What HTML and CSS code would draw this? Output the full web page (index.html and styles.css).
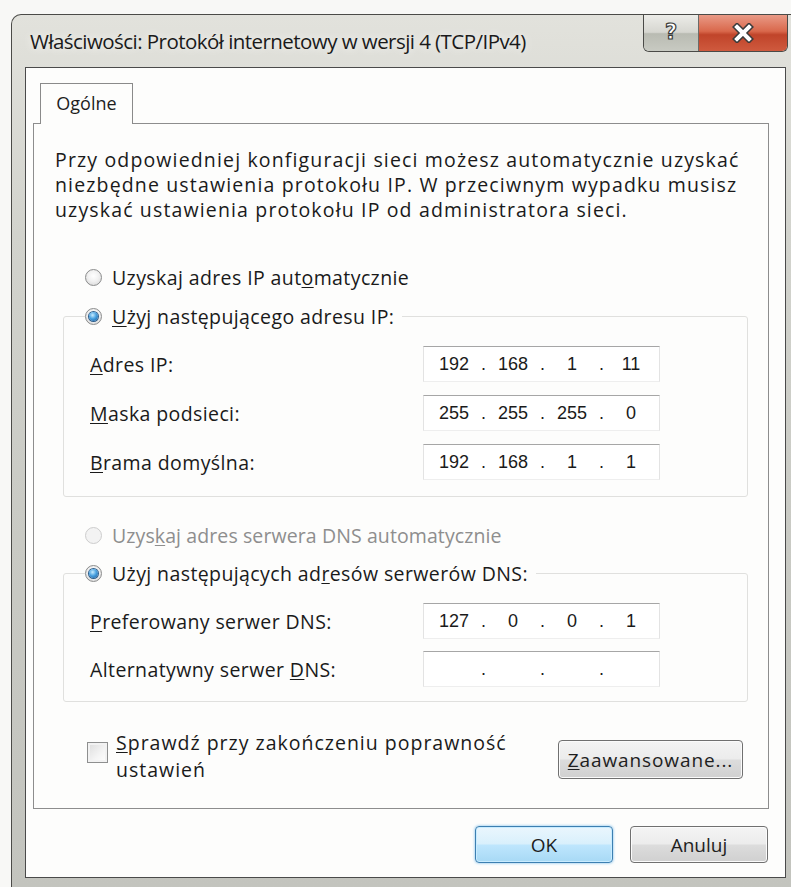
FILE: index.html
```html
<!DOCTYPE html>
<html lang="pl">
<head>
<meta charset="utf-8">
<title>Właściwości: Protokół internetowy w wersji 4 (TCP/IPv4)</title>
<link rel="stylesheet" href="styles.css">
</head>
<body>
<div class="window">
  <div class="titlebar">
    <span class="title">Właściwości: Protokół internetowy w wersji 4 (TCP/IPv4)</span>
    <div class="caption-btns">
      <span class="cap-btn help"><span class="help-glyph">?</span></span>
      <span class="cap-btn close">
        <svg width="22" height="20" viewBox="0 0 22 20">
          <path d="M5 4 L17 16 M17 4 L5 16" stroke="#3a3a3a" stroke-width="7" stroke-linecap="square"/>
          <path d="M5 4 L17 16 M17 4 L5 16" stroke="#ffffff" stroke-width="4" stroke-linecap="square"/>
        </svg>
      </span>
    </div>
  </div>

  <div class="client">
    <div class="tabs"><div class="tab">Ogólne</div></div>

    <div class="panel">
      <p class="intro">Przy odpowiedniej konfiguracji sieci możesz automatycznie uzyskać<br>niezbędne ustawienia protokołu IP. W przeciwnym wypadku musisz<br>uzyskać ustawienia protokołu IP od administratora sieci.</p>

      <div class="option first-option">
        <span class="radio"></span>
        <span>Uzyskaj adres IP aut<u>o</u>matycznie</span>
      </div>

      <fieldset class="group group-ip">
        <legend class="option">
          <span class="radio checked"></span>
          <span><u>U</u>żyj następującego adresu IP:</span>
        </legend>
        <div class="field-row">
          <span class="label"><u>A</u>dres IP:</span>
          <span class="ip-box"><span class="seg">192</span><span class="dot">.</span><span class="seg">168</span><span class="dot">.</span><span class="seg">1</span><span class="dot">.</span><span class="seg">11</span></span>
        </div>
        <div class="field-row">
          <span class="label"><u>M</u>aska podsieci:</span>
          <span class="ip-box"><span class="seg">255</span><span class="dot">.</span><span class="seg">255</span><span class="dot">.</span><span class="seg">255</span><span class="dot">.</span><span class="seg">0</span></span>
        </div>
        <div class="field-row">
          <span class="label"><u>B</u>rama domyślna:</span>
          <span class="ip-box"><span class="seg">192</span><span class="dot">.</span><span class="seg">168</span><span class="dot">.</span><span class="seg">1</span><span class="dot">.</span><span class="seg">1</span></span>
        </div>
      </fieldset>

      <div class="option disabled dns-auto">
        <span class="radio disabled"></span>
        <span>Uzys<u>k</u>aj adres serwera DNS automatycznie</span>
      </div>

      <fieldset class="group group-dns">
        <legend class="option">
          <span class="radio checked"></span>
          <span>Użyj następujących ad<u>r</u>esów serwerów DNS:</span>
        </legend>
        <div class="field-row">
          <span class="label"><u>P</u>referowany serwer DNS:</span>
          <span class="ip-box"><span class="seg">127</span><span class="dot">.</span><span class="seg">0</span><span class="dot">.</span><span class="seg">0</span><span class="dot">.</span><span class="seg">1</span></span>
        </div>
        <div class="field-row">
          <span class="label alt">Alternatywny serwer <u>D</u>NS:</span>
          <span class="ip-box"><span class="seg"></span><span class="dot">.</span><span class="seg"></span><span class="dot">.</span><span class="seg"></span><span class="dot">.</span><span class="seg"></span></span>
        </div>
      </fieldset>

      <div class="check-row">
        <span class="checkbox"></span>
        <span class="check-label">
          <span class="check-line"><u>S</u>prawdź przy zakończeniu poprawność</span>
          <span class="check-line">ustawień</span>
        </span>
        <button class="btn advanced" type="button"><u>Z</u>aawansowane...</button>
      </div>
    </div>

    <div class="dialog-buttons">
      <button class="btn default" type="button">OK</button>
      <button class="btn" type="button">Anuluj</button>
    </div>
  </div>
</div>
</body>
</html>
```
FILE: styles.css
```css
* {
  box-sizing: border-box;
}

html,
body {
  margin: 0;
  padding: 0;
  background: #f8f8f6;
  overflow: hidden;
}

body {
  width: 791px;
  height: 887px;
  font-family: "Open Sans", "Noto Sans", sans-serif;
  color: #222;
}

u {
  text-decoration-thickness: 1px;
  text-underline-offset: 2px;
}

/* window frame (Aero glass, light grey) */
.window {
  margin: 14px 0 0 11px;
  width: 790px;
  border: 1px solid #4b4b48;
  border-bottom: none;
  border-radius: 10px 10px 0 0;
  background: linear-gradient(180deg, #e2e2dc 0%, #d2d3cd 25%, #c9cac4 60%, #c3c4be 100%);
  padding: 0 14px 10px 13px;
  display: flex;
  flex-direction: column;
}

.titlebar {
  height: 52px;
  display: flex;
  align-items: center;
}

.title {
  margin-left: 5px;
  font-size: 20.5px;
  letter-spacing: -0.55px;
  color: #1a1a1a;
  text-shadow: 0 0 8px rgba(255, 255, 255, 0.9);
  white-space: nowrap;
}

.caption-btns {
  margin-left: auto;
  margin-right: -2px;
  align-self: flex-start;
  display: flex;
  height: 37px;
  border: 1px solid #4a4a47;
  border-top: none;
  border-radius: 0 0 6px 6px;
  overflow: hidden;
}

.cap-btn {
  display: flex;
  align-items: center;
  justify-content: center;
  height: 100%;
}

.cap-btn.help {
  width: 55px;
  border-right: 1px solid #6b6b68;
  background: linear-gradient(180deg, #ecece8 0%, #d6d6d0 48%, #b9bbb2 52%, #c8cac2 100%);
}

.help-glyph {
  font-family: "DejaVu Sans", sans-serif;
  font-weight: bold;
  font-size: 21px;
  color: #ffffff;
  -webkit-text-stroke: 1.2px #3c3c3a;
  margin-top: -2px;
}

.cap-btn.close {
  width: 88px;
  background: linear-gradient(180deg, #e99a86 0%, #d9684c 45%, #c0442a 55%, #cf5a3e 100%);
}

/* client area */
.client {
  height: 811px;
  border: 1px solid #4a4a4a;
  background: #fdfdfc;
  padding: 15px 16px 0 7px;
  display: flex;
  flex-direction: column;
}

.tabs {
  display: flex;
  padding-left: 7px;
  position: relative;
  z-index: 1;
  margin-bottom: -1px;
}

.tab {
  width: 93px;
  height: 41px;
  border: 1px solid #8a8a8a;
  border-bottom: none;
  background: #fdfdfc;
  font-size: 18px;
  display: flex;
  align-items: center;
  justify-content: center;
  padding-bottom: 2px;
  color: #1e1e1e;
}

.panel {
  width: 736px;
  height: 686px;
  border: 1px solid #8d8d8d;
  font-size: 19.5px;
  letter-spacing: 0.4px;
  color: #1a1a1a;
  padding-right: 20px;
}

.intro {
  margin: 23px 0 0 21px;
  line-height: 25px;
  letter-spacing: 1.15px;
  white-space: nowrap;
}

.option {
  display: flex;
  align-items: center;
  gap: 10px;
  height: 25px;
  white-space: nowrap;
}

.first-option {
  margin-top: 43px;
  padding-left: 51px;
}

.option.disabled {
  color: #8e8e8e;
  letter-spacing: 0.1px;
}

.radio {
  width: 17px;
  height: 17px;
  flex: none;
  border-radius: 50%;
  border: 1px solid #8b8c8c;
  background: radial-gradient(circle at 50% 40%, #ffffff 0%, #f1f1f1 45%, #d2d2d2 100%);
  position: relative;
}

.radio.checked::after {
  content: "";
  position: absolute;
  left: 3px;
  top: 3px;
  width: 9px;
  height: 9px;
  border-radius: 50%;
  background: radial-gradient(circle at 40% 35%, #c8ecff 0%, #4aa2e0 45%, #105296 100%);
  box-shadow: 0 0 0 1px #2f5f8c;
}

.radio.disabled {
  border-color: #cdcdcd;
  background: #f3f3f3;
}

/* group boxes */
.group {
  margin: 14px 0 0 29px;
  width: 685px;
  border: 1px solid #e0e0de;
  border-radius: 3px;
  padding: 0 0 16px 26px;
}

.group legend {
  margin-left: -5px;
  padding: 0 8px 0 0;
}

.group-ip .field-row:first-of-type {
  margin-top: 17px;
}

.group-dns {
  margin-top: 13px;
  padding-bottom: 14px;
}

.group-dns .field-row:first-of-type {
  margin-top: 17px;
}

.field-row {
  display: grid;
  grid-template-columns: 333px 237px;
  align-items: center;
  margin-top: 13px;
}

.group-dns .field-row + .field-row {
  margin-top: 12px;
}

.label {
  white-space: nowrap;
}

.ip-box {
  height: 36px;
  border: 1px solid #e3e3e3;
  border-top-color: #a6a6a6;
  border-bottom-color: #eeeeee;
  background: #fff;
  display: flex;
  align-items: center;
  padding-left: 9px;
  font-family: "Liberation Sans", Arial, sans-serif;
  font-size: 18px;
  letter-spacing: 0;
  color: #1a1a1a;
}

.seg {
  width: 42px;
  text-align: center;
}

.dot {
  width: 17px;
  text-align: center;
}

.dns-auto {
  margin-top: 26px;
  padding-left: 51px;
}

/* checkbox + advanced button */
.check-row {
  display: flex;
  align-items: flex-start;
  margin-top: 27px;
  padding-left: 53px;
  padding-right: 5px;
}

.checkbox {
  width: 21px;
  height: 21px;
  flex: none;
  margin-top: 13px;
  border: 1px solid #8e8f8f;
  background: linear-gradient(135deg, #dcdcdc 0%, #f4f4f4 60%, #ffffff 100%);
  box-shadow: inset 0 0 0 2px #f2f2f2;
}

.check-label {
  margin-left: 8px;
  display: flex;
  flex-direction: column;
  letter-spacing: 1px;
}

.check-line {
  line-height: 27px;
  white-space: nowrap;
}

.btn {
  font-family: "Open Sans", "Noto Sans", sans-serif;
  font-size: 19px;
  color: #1e1e1e;
  height: 37px;
  width: 138px;
  border: 1px solid #707070;
  border-radius: 4px;
  background: linear-gradient(180deg, #f4f4f4 0%, #ececec 48%, #dcdcdc 52%, #d0d0d0 100%);
  box-shadow: inset 0 0 0 1px #fbfbfb;
  padding: 0;
}

.btn.advanced {
  margin-left: auto;
  margin-top: 11px;
  width: 185px;
  height: 39px;
  letter-spacing: 0.9px;
}

.dialog-buttons {
  display: flex;
  justify-content: flex-end;
  gap: 17px;
  margin-top: 17px;
  padding-right: 1px;
}

.btn.default {
  border-color: #3c7fb1;
  background: linear-gradient(180deg, #eaf6fd 0%, #d9f0fc 48%, #bee6fd 52%, #a7d9f5 100%);
  box-shadow: inset 0 0 0 1px #c9ecff, 0 0 3px #6fb8ea;
}
```
